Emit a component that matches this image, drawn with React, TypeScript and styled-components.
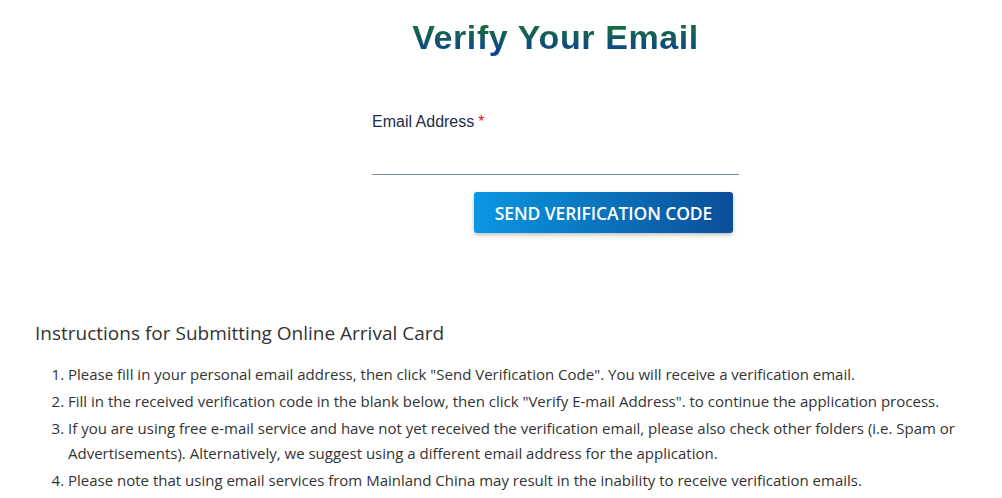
import styled, { createGlobalStyle } from "styled-components";

const GlobalStyle = createGlobalStyle`
  html, body {
    margin: 0;
    padding: 0;
    background: #ffffff;
  }
  body {
    font-family: "Open Sans", "Noto Sans", sans-serif;
    color: #333333;
  }
`;

const Page = styled.div`
  width: 1002px;
  height: 498px;
  overflow: hidden;
  padding: 0 35px;
  box-sizing: border-box;
`;

const FormColumn = styled.section`
  width: 367px;
  margin-left: 337px;
  display: flex;
  flex-direction: column;
`;

const Title = styled.h1`
  margin: 17px 0 0;
  text-align: center;
  font-family: "Liberation Sans", Arial, sans-serif;
  font-weight: 700;
  font-size: 34px;
  line-height: 40px;
  letter-spacing: 0.6px;
  background: linear-gradient(to bottom, #1c7030 15%, #0a4294 90%);
  -webkit-background-clip: text;
  background-clip: text;
  color: transparent;
`;

const Field = styled.label`
  margin-top: 55px;
  display: flex;
  flex-direction: column;
`;

const Label = styled.span`
  font-family: "Liberation Sans", Arial, sans-serif;
  font-size: 16px;
  line-height: 20px;
  color: #1c2b4a;
`;

const Required = styled.span`
  color: #e0141e;
  margin-left: 4px;
`;

const Input = styled.input`
  margin-top: 12px;
  height: 30px;
  border: 0;
  border-bottom: 1px solid #7b8a98;
  outline: none;
  padding: 0;
  font-size: 16px;
  background: transparent;
`;

const SendButton = styled.button`
  align-self: flex-end;
  margin: 17px 6px 0 0;
  width: 259px;
  height: 41px;
  border: 0;
  border-radius: 3px;
  background: linear-gradient(to right, #0a97e2, #0b4e98);
  box-shadow: 0 2px 4px rgba(0, 0, 0, 0.25);
  color: #ffffff;
  font-family: "Open Sans", sans-serif;
  font-weight: 600;
  font-size: 17.5px;
  letter-spacing: -0.1px;
  text-transform: uppercase;
  cursor: pointer;
`;

const Instructions = styled.section`
  margin-top: 88px;
`;

const Heading = styled.h2`
  margin: 0;
  font-weight: 500;
  font-size: 19px;
  line-height: 24px;
  color: #333333;
`;

const Steps = styled.ol`
  margin: 17px 0 0;
  padding-left: 33px;
  font-size: 15px;
  line-height: 25px;
  color: #333333;
`;

const Step = styled.li`
  margin-bottom: 2px;
`;

const steps = [
  'Please fill in your personal email address, then click "Send Verification Code". You will receive a verification email.',
  'Fill in the received verification code in the blank below, then click "Verify E-mail Address". to continue the application process.',
  "If you are using free e-mail service and have not yet received the verification email, please also check other folders (i.e. Spam or Advertisements). Alternatively, we suggest using a different email address for the application.",
  "Please note that using email services from Mainland China may result in the inability to receive verification emails.",
];

export default function App() {
  return (
    <>
      <GlobalStyle />
      <Page>
        <FormColumn>
          <Title>Verify Your Email</Title>
          <Field>
            <Label>
              Email Address<Required>*</Required>
            </Label>
            <Input type="email" />
          </Field>
          <SendButton type="button">Send Verification Code</SendButton>
        </FormColumn>
        <Instructions>
          <Heading>Instructions for Submitting Online Arrival Card</Heading>
          <Steps>
            {steps.map((s) => (
              <Step key={s}>{s}</Step>
            ))}
          </Steps>
        </Instructions>
      </Page>
    </>
  );
}
